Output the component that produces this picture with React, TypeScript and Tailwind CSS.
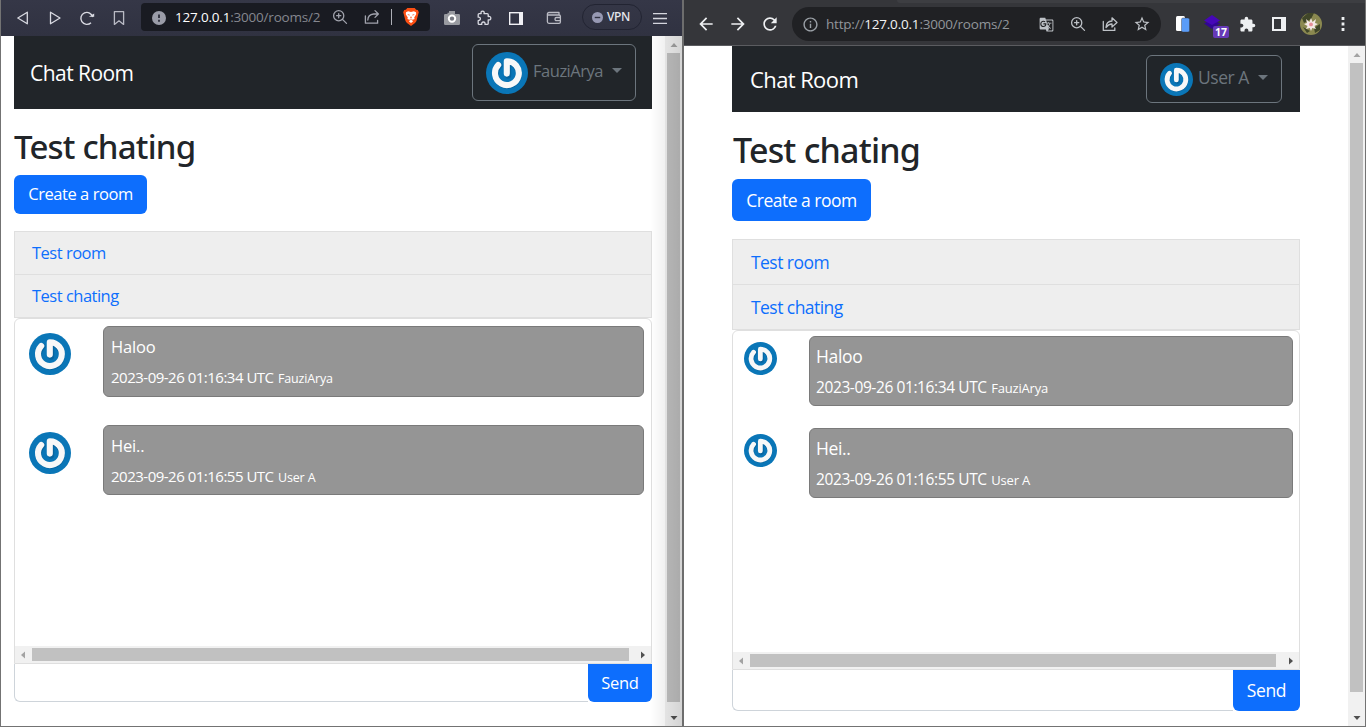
import React from "react";
import { MdArrowBack, MdArrowForward, MdRefresh, MdExtension, MdStarBorder, MdInfoOutline, MdGTranslate } from "react-icons/md";

const PowerAvatar = ({ className }: { className: string }) => (
  <svg viewBox="-21 -21 42 42" className={className}>
    <circle r="21" fill="#0a76b7" />
    <path d="M.6 1.6V-11.4A11.6 11.6 0 1 1-8-8.4" transform="translate(.5 1)" fill="none" stroke="#05568c" strokeOpacity=".55" strokeWidth="6.2" strokeLinecap="round" strokeLinejoin="round" />
    <path d="M-.2 .6V-11.8A11.9 11.9 0 1 1-8.8-8" fill="none" stroke="#f8f8f8" strokeWidth="6.1" strokeLinecap="round" strokeLinejoin="round" />
  </svg>
);

const Slot = ({ children }: { children: React.ReactNode }) => (
  <span className="flex w-8 shrink-0 items-center justify-center">{children}</span>
);

const Line = ({ d, className }: { d: string; className: string }) => (
  <svg viewBox="0 0 16 16" className={className} fill="none" stroke="currentColor" strokeWidth="1.3" strokeLinecap="round" strokeLinejoin="round">
    <path d={d} />
  </svg>
);

const MAGNIFIER = "M6.7 1.6a5.1 5.1 0 1 0 0 10.2a5.1 5.1 0 0 0 0-10.2M10.5 10.4l4 4M6.7 4.6v4.2M4.6 6.7h4.2";
const PUZZLE = "M2.2 4.6Q2.2 3.6 3.2 3.6H5.2Q4.4 1.2 6.6 1.2T8 3.6H11.2Q12.2 3.6 12.2 4.6V6.6Q14.8 6 14.8 8.2T12.2 9.8V13.4Q12.2 14.4 11.2 14.4H9Q9.4 12 7.4 12T5.8 14.4H3.2Q2.2 14.4 2.2 13.4V10.6Q4.4 10.6 4.4 8.8T2.2 7.2Z";

function BraveBar() {
  return (
    <header className="flex h-9 shrink-0 items-center bg-linear-to-b from-[#353747] to-[#303241] pl-1.5 text-[#d9dae2]">
      <Slot><Line className="h-4 w-4" d="M12.3 2.2V13.8L2.8 8Z" /></Slot>
      <Slot><Line className="h-4 w-4" d="M3.5 2.2V13.8L13 8Z" /></Slot>
      <Slot>
        <svg viewBox="0 0 16 16" className="h-4 w-4" fill="none" stroke="currentColor" strokeWidth="1.4">
          <path d="M12 12.7A6 6 0 1 1 13.7 7" />
          <path d="M9.8 6.8H15.2V3.6Z" fill="currentColor" stroke="none" />
        </svg>
      </Slot>
      <Slot><Line className="h-4 w-4 text-[#b9bac4]" d="M3.4 1.6H12.6V14.4L8 10.8L3.4 14.4Z" /></Slot>
      <div className="-mt-0.5 ml-1.5 flex h-7 w-[289px] shrink-0 items-center rounded bg-[#191b22] text-[#a1a3ad]">
        <span className="flex w-[34px] shrink-0 justify-center pl-px pt-0.5">
          <svg viewBox="0 0 14 14" className="h-3.5 w-3.5"><circle cx="7" cy="7" r="7" fill="#9a9ca8" /><path d="M7 3.4V7M7 8.8V10.7" stroke="#353744" strokeWidth="2" /></svg>
        </span>
        <span className="w-[149px] shrink-0 whitespace-nowrap font-['Open_Sans',sans-serif] text-[13.5px] leading-5 tracking-[-0.2px] text-[#85878f]"><span className="text-white">127.0.0.1</span>:3000/rooms/2</span>
        <Slot><Line className="h-4 w-4" d={MAGNIFIER} /></Slot>
        <Slot><Line className="h-4 w-4" d="M1.4 7V14.2H13.6V11.5M3.8 11Q4 5.6 9.6 5H14.4M11 1.6L14.4 5L11 8.4" /></Slot>
        <span className="mx-[3px] h-4 w-px shrink-0 bg-[#aeb0b7]" />
        <span className="flex w-8 shrink-0 justify-center">
          <svg viewBox="0 0 16 18" className="h-[18px] w-4">
            <path d="M4.3 0H11.7L13.2 1.7L14.8 2L15.8 4.3L15.3 6L13.6 12.5Q13.3 13.9 12 14.9L8 18L4 14.9Q2.7 13.9 2.4 12.5L.7 6L.2 4.3L1.2 2L2.8 1.7Z" fill="#fb4f13" />
            <path d="M3 4.3L5.1 3.3L8 4L10.9 3.3L13 4.3L13.2 6.2L11.2 9.4L11.6 11L9 12.1L10 13.5L8 15L6 13.5L7 12.1L4.4 11L4.8 9.4L2.8 6.2Z" fill="#fff" />
            <path d="M4.2 6L6.7 6.7L6.2 7.7ZM11.8 6L9.3 6.7L9.8 7.7ZM8 8L8.8 10L8 10.6L7.2 10ZM6 11.6L8 12.3L10 11.6" fill="#fb4f13" />
          </svg>
        </span>
      </div>
      <span className="w-1.5 shrink-0" />
      <Slot>
        <svg viewBox="0 0 16 14" className="h-[14px] w-4"><path d="M1.3 3H3.5V1.8H5V0H11V3H14.7Q16 3 16 4.3V12.7Q16 14 14.7 14H1.3Q0 14 0 12.7V4.3Q0 3 1.3 3Z" fill="#999ba1" /><circle cx="8" cy="7.6" r="3.2" fill="#777982" stroke="#fff" strokeWidth="2" /></svg>
      </Slot>
      <Slot><Line className="h-4 w-4" d={PUZZLE} /></Slot>
      <Slot>
        <svg viewBox="0 0 14 13" className="h-[13px] w-3.5"><rect x=".7" y=".7" width="12.6" height="11.6" fill="none" stroke="#f0f0f4" strokeWidth="1.4" /><path d="M10 0H14V13H10Z" fill="#f0f0f4" /></svg>
      </Slot>
      <span className="w-1.5 shrink-0" />
      <Slot><Line className="h-4 w-4 text-[#babbc4]" d="M13 5V2.5H3Q1.4 2.5 1.4 4V11.8Q1.4 13.3 3 13.3H13Q14.4 13.3 14.4 12V6.3Q14.4 5 13 5H1.6M14.4 7.5H10.5Q9 7.5 9 9.1T10.5 10.6H14.4" /></Slot>
      <div className="-mt-0.5 ml-3 flex h-[26px] w-[60px] shrink-0 items-center gap-1 rounded-full border border-[#222432] pl-[9px]">
        <svg viewBox="0 0 12 12" className="h-[11px] w-[11px]"><circle cx="6" cy="6" r="6" fill="#9799b3" /><path d="M3 6H9" stroke="#303241" strokeWidth="1.5" /></svg>
        <span className="font-['Noto_Sans',sans-serif] text-[12px] font-medium tracking-[-0.3px] text-[#e6e7ed]">VPN</span>
      </div>
      <svg viewBox="0 0 14 11" className="ml-[11px] h-[11px] w-3.5 shrink-0"><path d="M0 .7H14M0 5.5H14M0 10.3H14" stroke="#d5d6de" strokeWidth="1.3" /></svg>
    </header>
  );
}

function ChromeBar() {
  return (
    <header className="flex h-[46px] shrink-0 flex-col border-b border-[#5b5c60] bg-[#35363a] text-[#eef0f2]">
      <div className="ml-[213px] h-[3px] shrink-0 rounded-bl bg-[#3d3e42]" />
      <div className="flex flex-1 items-center pl-1.5">
        <Slot><MdArrowBack size={20} /></Slot>
        <Slot><MdArrowForward size={20} /></Slot>
        <Slot><MdRefresh size={20} /></Slot>
        <div className="ml-1.5 flex h-[34px] w-[369px] shrink-0 items-center rounded-full bg-[#202124] text-[#bdc1c6]">
          <span className="flex w-[34px] justify-center pl-0.5 text-[#9aa0a6]"><MdInfoOutline size={17} /></span>
          <span className="w-[204px] shrink-0 whitespace-nowrap font-['Open_Sans',sans-serif] text-[13.5px] leading-5 tracking-[-0.2px] text-[#92969b]">http://<span className="text-[#f3f3f4]">127.0.0.1</span>:3000/rooms/2</span>
          <Slot><MdGTranslate size={15} /></Slot>
          <Slot><Line className="h-4 w-4" d={MAGNIFIER} /></Slot>
          <Slot><Line className="h-4 w-4" d="M1.3 5.5V14.4H12.8V12M4 11.5Q4.2 5.2 10 5V1.8L15 6.5L10 11V8Q6.5 8 4 11.5Z" /></Slot>
          <Slot><MdStarBorder size={18} /></Slot>
        </div>
        <span className="w-1.5 shrink-0" />
        <Slot><svg viewBox="0 0 14 16" className="h-4 w-3.5"><rect width="9" height="15" rx="1.5" fill="#fff" /><rect x="5.5" y="2" width="8" height="14" rx="1.5" fill="#5a9cf8" stroke="#35363a" strokeWidth=".4" /></svg></Slot>
        <span className="relative flex h-8 w-8 shrink-0 items-center justify-center">
          <svg viewBox="0 0 16 14" className="mb-1 mr-1.5 h-3.5 w-4"><path d="M8 4L16 8.5L8 14L0 8.5Z" fill="#310693" /><path d="M8 0L16 5.5L8 10L0 5.5Z" fill="#4607b8" /></svg>
          <span className="absolute left-[14px] top-[18px] flex h-3 w-4 items-center justify-center rounded-xs bg-[#6639b7] font-['Open_Sans',sans-serif] text-[10.5px] font-bold leading-3 text-white">17</span>
        </span>
        <Slot><MdExtension size={17} /></Slot>
        <Slot><svg viewBox="0 0 14 14" className="h-3.5 w-3.5"><path d="M1 1H13V13H1Z" fill="none" stroke="currentColor" strokeWidth="2" /><path d="M9 0H14V14H9Z" fill="currentColor" /></svg></Slot>
        <Slot>
          <svg viewBox="-11 -11 22 22" className="h-[22px] w-[22px]">
            <circle r="11" fill="#8b8950" /><path d="M-9-6L-3-11H3L0-5L-7-1ZM3 4L9 0L9 6L4 9ZM-8 3L-4 9L-1 7Z" fill="#404629" />
            <g fill="#f5e9e6"><path d="M0-6L1.6-2L5-5L4-1L7 0L3.5 2L5 5L1.2 4L0 7L-1.2 4L-5 5L-3.5 2L-7 0L-4-1L-5-5L-1.6-2Z" /></g><circle cy=".4" r="1.9" fill="#e68e98" />
          </svg>
        </Slot>
        <Slot><svg viewBox="0 0 4 14" className="h-3.5 w-1"><path d="M.6 0H3.4V3H.6ZM.6 5.5H3.4V8.5H.6ZM.6 11H3.4V14H.6Z" fill="currentColor" /></svg></Slot>
      </div>
    </header>
  );
}

const Arrow = ({ d, className }: { d: string; className: string }) => (
  <svg viewBox="0 0 8 8" className={className}><path d={d} fill="currentColor" /></svg>
);
const UP = "M.5 6L4 2L7.5 6Z";
const DOWN = "M.5 2L4 6L7.5 2Z";
const LEFT = "M6 .5L2 4L6 7.5Z";
const RIGHT = "M2 .5L6 4L2 7.5Z";

function VerticalScroll({ thumb }: { thumb: string }) {
  return (
    <div className="flex w-[17px] shrink-0 flex-col items-center bg-[#f1f1f1]">
      <div className="flex h-[17px] items-center text-[#a3a3a3]"><Arrow className="h-2 w-2" d={UP} /></div>
      <div className={thumb} />
      <div className="mt-auto flex h-[17px] items-center text-[#505050]"><Arrow className="h-2 w-2" d={DOWN} /></div>
    </div>
  );
}

interface Metrics {
  main: string; nav: string; brand: string; dropdown: string; navAvatar: string; userName: string;
  heading: string; create: string; list: string; item: string; box: string; row: string;
  avatar: string; bubble: string; text: string; meta: string; author: string;
  track: string; form: string; send: string; caret: string;
}

const left: Metrics = {
  main: "ml-[13px] flex w-[638px] shrink-0 flex-col",
  nav: "flex h-[73px] shrink-0 items-start justify-between bg-[#212529] pl-4 pr-4 pt-2",
  brand: "pt-[14px] text-[21px] leading-[30px] tracking-[-0.55px] text-white",
  dropdown: "flex h-[57px] w-[164px] items-center rounded-md border border-[#6c757d] pl-[13px]",
  navAvatar: "h-[42px] w-[42px] shrink-0",
  userName: "-mt-[3px] ml-[5px] w-[70px] text-[16.5px] leading-6 tracking-[-0.5px] text-[#6c757d]",
  heading: "mt-[17px] h-[49px] font-['Noto_Sans',sans-serif] text-[33px] font-medium leading-[41px] tracking-[-0.8px]",
  create: "flex h-[39px] w-[133px] shrink-0 items-center justify-center rounded-md bg-[#0d6efd] text-[16.5px] tracking-[-0.45px] text-white",
  list: "mt-[17px] h-[87px] shrink-0 border border-[#dfdfdf] bg-[#eeeeee]",
  item: "flex h-[43px] items-center border-b border-[#dfdfdf] pl-[17px] pt-px text-[16.5px] tracking-[-0.5px] text-[#0d6efd] last:h-[42px] last:border-b-0 last:pt-0",
  box: "flex h-[346px] shrink-0 flex-col rounded-t-md border border-[#dfdfdf] pt-[7px]",
  row: "mb-7 flex h-[71px] shrink-0 items-start pl-[14px] last:h-[70px]",
  avatar: "mr-8 mt-[7px] h-[42px] w-[42px] shrink-0",
  bubble: "h-full w-[541px] rounded-md border border-[#7a7a7a] bg-[#959595] pl-[7px] pt-2 text-white",
  text: "text-[16.5px] leading-6 tracking-[-0.2px]",
  meta: "mt-1.5 text-[15px] leading-6 tracking-[-0.5px]",
  author: "ml-px text-[12.5px] tracking-[-0.15px]",
  track: "mt-auto flex h-[17px] shrink-0 items-center bg-[#f1f1f1]",
  form: "flex h-[38px] shrink-0",
  send: "flex w-16 items-center justify-center rounded-b-md bg-[#0d6efd] text-[16.5px] tracking-[-0.3px] text-white",
  caret: "ml-[9px] -mt-1 border-x-[5px] border-t-[5px] border-x-transparent border-t-[#6c757d]",
};

const right: Metrics = {
  main: "ml-12 flex w-[568px] shrink-0 flex-col",
  nav: "flex h-[66px] shrink-0 items-start justify-between bg-[#212529] pl-[18px] pr-[18px] pt-[9px]",
  brand: "pt-[9px] text-[22px] leading-[30px] tracking-[-0.6px] text-white",
  dropdown: "flex h-12 w-[136px] items-center rounded-md border border-[#6c757d] pl-[13px]",
  navAvatar: "h-[33px] w-[33px] shrink-0",
  userName: "-mt-[5px] ml-[5px] w-[51px] text-[17.5px] leading-6 tracking-[-0.45px] text-[#6c757d]",
  heading: "mt-[17px] h-[50px] pl-px font-['Noto_Sans',sans-serif] text-[34px] font-medium leading-[43px] tracking-[-0.8px]",
  create: "flex h-[42px] w-[139px] shrink-0 items-center justify-center rounded-md bg-[#0d6efd] pt-px text-[17.5px] tracking-[-0.5px] text-white",
  list: "mt-[18px] h-[91px] shrink-0 border border-[#dfdfdf] bg-[#eeeeee]",
  item: "flex h-[45px] items-center border-b border-[#dfdfdf] pl-[18px] text-[17.5px] tracking-[-0.55px] text-[#0d6efd] last:h-[44px] last:border-b-0",
  box: "flex h-[340px] shrink-0 flex-col rounded-t-md border border-[#dfdfdf] pt-[5px]",
  row: "mb-[22px] flex h-[70px] shrink-0 items-start pl-[11px]",
  avatar: "mr-8 mt-1.5 h-[33px] w-[33px] shrink-0",
  bubble: "h-full w-[484px] rounded-md border border-[#7a7a7a] bg-[#959595] pl-1.5 pt-[7px] text-white",
  text: "text-[17.5px] leading-6 tracking-[-0.35px]",
  meta: "mt-[7px] text-[15.5px] leading-6 tracking-[-0.4px]",
  author: "ml-px text-[13px] tracking-[-0.2px]",
  track: "mt-auto flex h-[17px] shrink-0 items-center bg-[#f1f1f1]",
  form: "flex h-[41px] shrink-0",
  send: "flex w-[67px] items-center justify-center rounded-b-md bg-[#0d6efd] text-[17.5px] tracking-[-0.4px] text-white",
  caret: "ml-[9px] -mt-1 border-x-[5px] border-t-[5px] border-x-transparent border-t-[#6c757d]",
};

const messages = [
  { text: "Haloo", time: "2023-09-26 01:16:34 UTC", author: "FauziArya" },
  { text: "Hei..", time: "2023-09-26 01:16:55 UTC", author: "User A" },
];

function ChatPage({ m, user }: { m: Metrics; user: string }) {
  return (
    <main className={m.main}>
      <nav className={m.nav}>
        <span className={m.brand}>Chat Room</span>
        <button className={m.dropdown}>
          <PowerAvatar className={m.navAvatar} />
          <span className={m.userName}>{user}</span>
          <span className={m.caret} />
        </button>
      </nav>
      <h1 className={m.heading}>Test chating</h1>
      <button className={m.create}>Create a room</button>
      <ul className={m.list}>
        <li className={m.item}>Test room</li>
        <li className={m.item}>Test chating</li>
      </ul>
      <section className={m.box}>
        <div>
          {messages.map((msg) => (
            <div key={msg.text} className={m.row}>
              <PowerAvatar className={m.avatar} />
              <div className={m.bubble}>
                <p className={m.text}>{msg.text}</p>
                <p className={m.meta}>{msg.time} <span className={m.author}>{msg.author}</span></p>
              </div>
            </div>
          ))}
        </div>
        <div className={m.track}>
          <span className="flex w-[17px] justify-center pr-px text-[#a3a3a3]"><Arrow className="h-2 w-2" d={LEFT} /></span>
          <span className={user === "User A" ? "h-[13px] w-[526px] bg-[#c1c1c1]" : "h-[13px] w-[597px] bg-[#c1c1c1]"} />
          <span className="ml-auto flex w-[17px] justify-center text-[#505050]"><Arrow className="h-2 w-2" d={RIGHT} /></span>
        </div>
      </section>
      <form className={m.form}>
        <input aria-label="Message" className="min-w-0 flex-1 rounded-bl-md border border-t-0 border-r-0 border-[#ced4da] bg-white" />
        <button type="button" className={m.send}>Send</button>
      </form>
    </main>
  );
}

export default function App() {
  return (
    <div className="flex h-[727px] w-[1366px] overflow-hidden whitespace-nowrap border-b border-[#737373] bg-white font-['Open_Sans',sans-serif] text-[#212529]">
      <div className="relative flex w-[684px] shrink-0 flex-col border-l border-r-2 border-l-[#737373] border-r-[#6d6d6d]">
        <BraveBar />
        <div className="flex flex-1 justify-between">
          <ChatPage m={left} user="FauziArya" />
          <VerticalScroll thumb="h-[649px] w-[13px] bg-[#c1c1c1]" />
        </div>
        <div className="pointer-events-none absolute bottom-0 right-0 top-9 w-8 bg-linear-to-r from-black/0 to-black/12" />
      </div>
      <div className="flex w-[682px] shrink-0 flex-col border-r border-[#737373]">
        <ChromeBar />
        <div className="flex flex-1 justify-between">
          <ChatPage m={right} user="User A" />
          <VerticalScroll thumb="h-[629px] w-[13px] bg-[#c1c1c1]" />
        </div>
      </div>
    </div>
  );
}
